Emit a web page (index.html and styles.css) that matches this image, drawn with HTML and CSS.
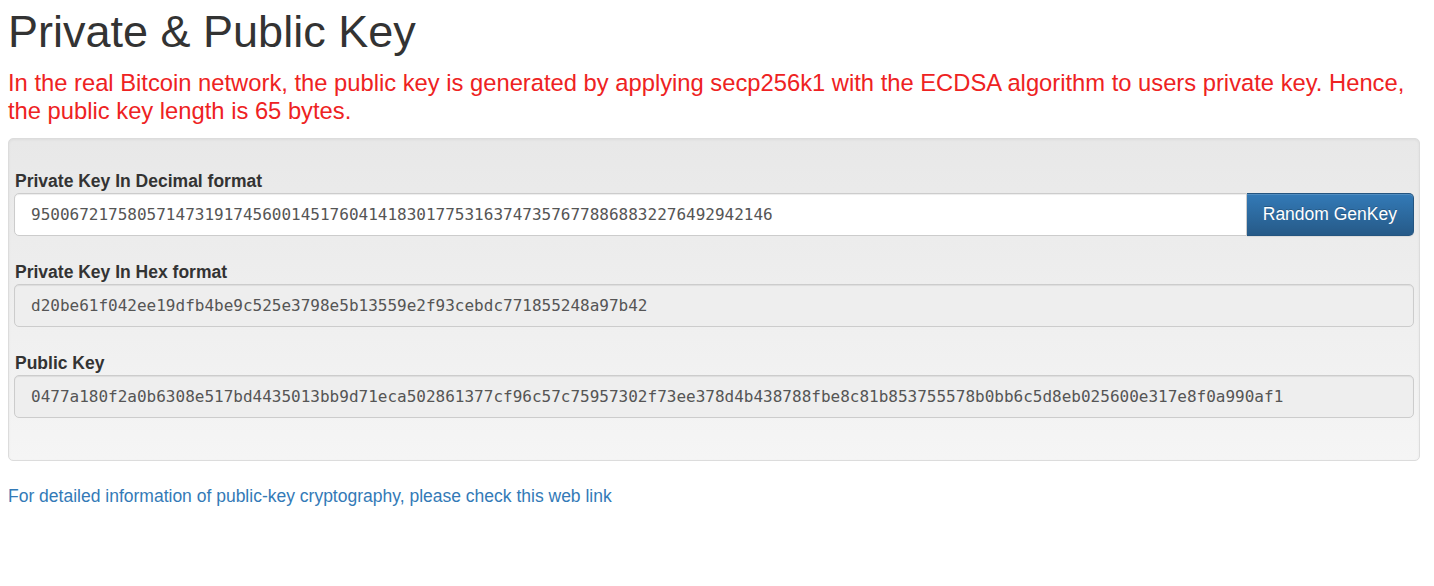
FILE: index.html
```html
<!DOCTYPE html>
<html lang="en">
<head>
<meta charset="utf-8">
<title>Private &amp; Public Key</title>
<link rel="stylesheet" href="styles.css">
</head>
<body>
<div class="page">
  <h1 class="title">Private &amp; Public Key</h1>
  <p class="note">In the real Bitcoin network, the public key is generated by applying secp256k1 with the ECDSA algorithm to users private key. Hence, the public key length is 65 bytes.</p>
  <div class="well">
    <div class="form-group">
      <label class="label">Private Key In Decimal format</label>
      <div class="input-group">
        <input class="form-control grow" type="text" value="95006721758057147319174560014517604141830177531637473576778868832276492942146">
        <button class="btn-primary" type="button">Random GenKey</button>
      </div>
    </div>
    <div class="form-group">
      <label class="label">Private Key In Hex format</label>
      <input class="form-control readonly" type="text" readonly value="d20be61f042ee19dfb4be9c525e3798e5b13559e2f93cebdc771855248a97b42">
    </div>
    <div class="form-group">
      <label class="label">Public Key</label>
      <input class="form-control readonly" type="text" readonly value="0477a180f2a0b6308e517bd4435013bb9d71eca502861377cf96c57c75957302f73ee378d4b438788fbe8c81b853755578b0bb6c5d8eb025600e317e8f0a990af1">
    </div>
  </div>
  <a class="link" href="#">For detailed information of public-key cryptography, please check this web link</a>
</div>
</body>
</html>
```
FILE: styles.css
```css
html, body {
  margin: 0;
  padding: 0;
  background: #fff;
}
body {
  font-family: "Liberation Sans", Arial, Helvetica, sans-serif;
  font-size: 17.5px;
  line-height: 25px;
  color: #333;
}
.page {
  padding: 7px 14px 0 8px;
}
.title {
  margin: 0;
  font-size: 45px;
  line-height: 50px;
  font-weight: 400;
  color: #333;
}
.note {
  margin: 11.6px 0 0 0;
  font-size: 23.75px;
  line-height: 28px;
  color: #ee2222;
}
.well {
  margin-top: 13.4px;
  padding: 30.5px 5px 18px 5px;
  border: 1px solid #dcdcdc;
  border-radius: 5px;
  background: linear-gradient(to bottom, #e8e8e8 0%, #f5f5f5 100%);
  box-shadow: inset 0 1px 3px rgba(0, 0, 0, 0.05), 0 1px 0 rgba(255, 255, 255, 0.1);
}
.form-group {
  display: flex;
  flex-direction: column;
  margin-bottom: 24px;
}
.label {
  display: block;
  font-weight: 700;
  font-size: 17.5px;
  line-height: 24px;
  color: #333;
  padding-left: 1px;
}
.input-group {
  display: flex;
}
.form-control {
  box-sizing: border-box;
  height: 43px;
  padding: 0 16px;
  border: 1px solid #ccc;
  border-radius: 5px;
  background: #fff;
  font-family: "DejaVu Sans Mono", "Liberation Mono", monospace;
  font-size: 16px;
  color: #555;
  box-shadow: inset 0 1px 1px rgba(0, 0, 0, 0.075);
  outline: none;
  width: 100%;
}
.grow {
  flex: 1 1 auto;
  min-width: 0;
  border-top-right-radius: 0;
  border-bottom-right-radius: 0;
}
.readonly {
  background: #eeeeee;
}
.btn-primary {
  flex: 0 0 auto;
  box-sizing: border-box;
  height: 43px;
  padding: 0 16px;
  border: 1px solid #245580;
  border-left: 0;
  border-radius: 0 5px 5px 0;
  background: linear-gradient(to bottom, #337ab7 0%, #265a88 100%);
  color: #fff;
  font-family: "Liberation Sans", Arial, Helvetica, sans-serif;
  font-size: 17.5px;
  text-shadow: 0 -1px 0 rgba(0, 0, 0, 0.2);
  box-shadow: inset 0 1px 0 rgba(255, 255, 255, 0.15), 0 1px 1px rgba(0, 0, 0, 0.075);
  cursor: pointer;
}
.link {
  display: inline-block;
  margin-top: 22.5px;
  color: #337ab7;
  text-decoration: none;
  font-size: 17.5px;
  line-height: 25px;
}
```
